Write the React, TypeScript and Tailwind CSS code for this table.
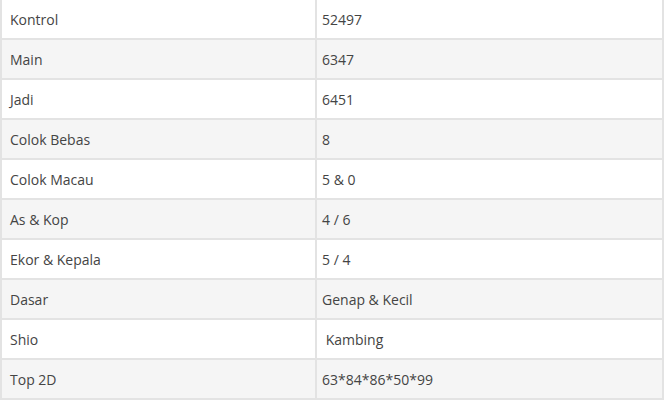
const rows: [string, string][] = [
  ['Kontrol', '52497'],
  ['Main', '6347'],
  ['Jadi', '6451'],
  ['Colok Bebas', '8'],
  ['Colok Macau', '5 & 0'],
  ['As & Kop', '4 / 6'],
  ['Ekor & Kepala', '5 / 4'],
  ['Dasar', 'Genap & Kecil'],
  ['Shio', '\u00a0Kambing'],
  ['Top 2D', '63*84*86*50*99'],
];

export default function App() {
  return (
    <div className="w-[666px] h-[402px] bg-white overflow-hidden" style={{ fontFamily: '"Open Sans", "Noto Sans", sans-serif' }}>
      <table className="w-[664px] border-collapse -mt-[2px] text-[14px] text-[#444]">
        <tbody>
          {rows.map(([label, value], i) => (
            <tr key={label} className={i % 2 === 1 ? 'bg-[#f5f5f5]' : 'bg-white'}>
              <td className="w-[315px] h-[40px] border-2 border-[#e3e3e3] pl-[8px] py-0 align-middle">{label}</td>
              <td className="h-[40px] border-2 border-[#e3e3e3] pl-[5px] py-0 align-middle">{value}</td>
            </tr>
          ))}
        </tbody>
      </table>
    </div>
  );
}
